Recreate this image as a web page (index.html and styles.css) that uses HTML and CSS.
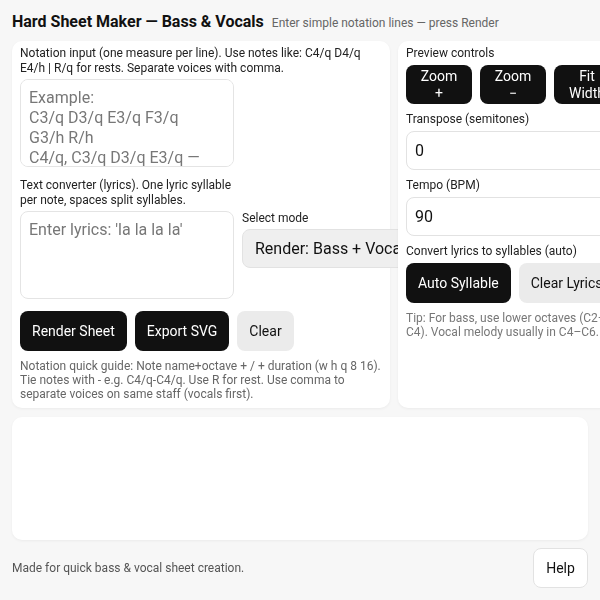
FILE: index.html
```html
<!DOCTYPE html>
<html lang="en">
<head>
<meta charset="utf-8">
<title>Hard Sheet Maker — Bass &amp; Vocals</title>
<link rel="stylesheet" href="styles.css">
</head>
<body>
<header class="header">
  <h1 class="title">Hard Sheet Maker — Bass &amp; Vocals</h1>
  <span class="subtitle">Enter simple notation lines — press Render</span>
</header>
<main class="grid">
  <section class="card left">
    <label class="label">Notation input (one measure per line). Use notes like: C4/q D4/q E4/h | R/q for rests. Separate voices with comma.</label>
    <textarea class="area notation" placeholder="Example:
C3/q D3/q E3/q F3/q
G3/h R/h
C4/q, C3/q D3/q E3/q — vocals, bass"></textarea>
    <label class="label lyr">Text converter (lyrics). One lyric syllable per note, spaces split syllables.</label>
    <div class="row">
      <textarea class="area lyrics" placeholder="Enter lyrics: 'la la la la'"></textarea>
      <div class="modecol">
        <label class="label">Select mode</label>
        <select class="select">
          <option>Render: Bass + Vocals</option>
        </select>
      </div>
    </div>
    <div class="btns">
      <button class="btn dark">Render Sheet</button>
      <button class="btn dark">Export SVG</button>
      <button class="btn light">Clear</button>
    </div>
    <p class="note">Notation quick guide: Note name+octave + / + duration (w h q 8 16). Tie notes with - e.g. C4/q-C4/q. Use R for rest. Use comma to separate voices on same staff (vocals first).</p>
  </section>
  <section class="card right">
    <label class="label">Preview controls</label>
    <div class="btns zooms">
      <button class="btn dark small">Zoom +</button>
      <button class="btn dark small">Zoom −</button>
      <button class="btn dark small">Fit Width</button>
    </div>
    <label class="label grp">Transpose (semitones)</label>
    <input class="input" type="text" value="0">
    <label class="label grp">Tempo (BPM)</label>
    <input class="input" type="text" value="90">
    <label class="label grp">Convert lyrics to syllables (auto)</label>
    <div class="btns nowrap">
      <button class="btn dark">Auto Syllable</button>
      <button class="btn light">Clear Lyrics</button>
    </div>
    <p class="note tip">Tip: For bass, use lower octaves (C2–C4). Vocal melody usually in C4–C6.</p>
  </section>
</main>
<section class="preview"></section>
<footer class="footer">
  <span class="foot-text">Made for quick bass &amp; vocal sheet creation.</span>
  <button class="btn help">Help</button>
</footer>
</body>
</html>
```
FILE: styles.css
```css
html { overflow-x: hidden; }
* { box-sizing: border-box; }
body {
  margin: 0;
  padding: 12px;
  background: #f7f7f7;
  font-family: Roboto, "Liberation Sans", sans-serif;
  color: #111;
  overflow-x: hidden;
}
.header {
  display: flex;
  align-items: baseline;
  height: 19px;
  margin-bottom: 10px;
}
.title {
  margin: 0;
  font-size: 16px;
  font-weight: 700;
  line-height: 19px;
  white-space: nowrap;
}
.subtitle {
  margin-left: 8px;
  font-size: 12px;
  color: #666;
  white-space: nowrap;
}
.grid {
  display: grid;
  grid-template-columns: 378px 226px;
  gap: 8px;
  width: 576px;
}
.card {
  background: #fff;
  border-radius: 10px;
  box-shadow: 0 1px 3px rgba(0,0,0,0.05);
  padding: 5px 8px 7px;
}
.right { position: relative; }
.label {
  display: block;
  font-size: 12px;
  line-height: 15px;
  color: #222;
  margin-bottom: 3px;
}
.right .label { margin-bottom: 4px; }
.label.grp { margin-top: 8px; }
.label.lyr { margin-top: 11px; max-width: 216px; }
.area {
  display: block;
  flex: none;
  width: 214px;
  border: 1px solid #e4e4e4;
  border-radius: 8px;
  padding: 8px;
  font-family: Roboto, "Liberation Sans", sans-serif;
  font-size: 16px;
  line-height: 20px;
  resize: none;
  color: #111;
  background: #fff;
}
.area::placeholder { color: #777; }
.notation { height: 88px; }
.lyrics { height: 88px; }
.row {
  display: flex;
  gap: 8px;
}
.modecol { flex: none; }
.select {
  display: block;
  margin-top: 1px;
  height: 39px;
  padding: 0 30px 0 12px;
  border: 1px solid #e2e2e2;
  border-radius: 8px;
  background: #efefef;
  font-family: Roboto, "Liberation Sans", sans-serif;
  font-size: 16px;
  color: #111;
  appearance: none;
  -webkit-appearance: none;
  white-space: nowrap;
}
.btns {
  display: flex;
  gap: 8px;
  margin-top: 12px;
}
.right .btns { margin-top: 0; }
.nowrap { white-space: nowrap; }
.btn {
  height: 40px;
  padding: 0 12px;
  border: none;
  border-radius: 8px;
  font-family: Roboto, "Liberation Sans", sans-serif;
  font-size: 14px;
  white-space: nowrap;
  flex: none;
}
.dark { background: #111; color: #fff; }
.light { background: #ebebeb; color: #111; }
.small {
  width: 66px;
  height: 39px;
  padding: 0 12px;
  line-height: 17px;
  white-space: normal;
}
.input {
  display: block;
  width: 100%;
  height: 39px;
  border: 1px solid #e2e2e2;
  border-radius: 8px;
  padding: 0 8px;
  font-family: Roboto, "Liberation Sans", sans-serif;
  font-size: 16px;
  color: #111;
  background: #fff;
}
.note {
  margin: 8px 0 0;
  font-size: 12px;
  line-height: 14px;
  color: #666;
}
.tip { color: #777; }
.preview {
  margin-top: 9px;
  width: 576px;
  height: 123px;
  background: #fff;
  border-radius: 10px;
  box-shadow: 0 1px 3px rgba(0,0,0,0.05);
}
.footer {
  display: flex;
  justify-content: space-between;
  align-items: center;
  width: 576px;
  margin-top: 8px;
}
.foot-text { font-size: 12px; color: #555; }
.help {
  width: 55px;
  background: #fff;
  color: #111;
  border: 1px solid #e2e2e2;
  padding: 0;
}
```
